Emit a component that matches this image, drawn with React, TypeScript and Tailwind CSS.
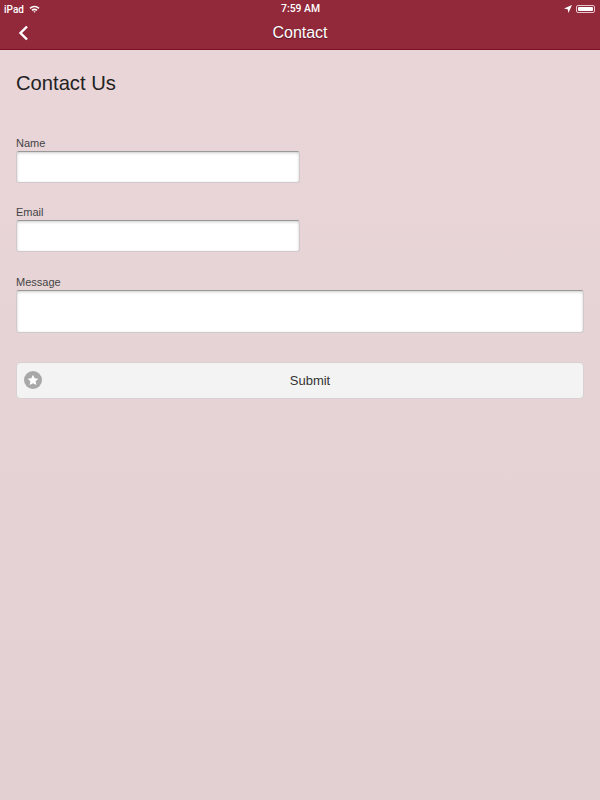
const FONT = "font-['Liberation_Sans',Arial,sans-serif]";

function Field({ label, tall, wide }: { label: string; tall?: boolean; wide?: boolean }) {
  return (
    <div className={`flex flex-col ${tall ? "mt-[1px]" : ""}`}>
      <label className="h-[17px] text-[11px] leading-[18px] text-[#444]">{label}</label>
      <div
        className={`${tall ? "h-[43px]" : "h-[32px]"} ${wide ? "w-[568px]" : "w-[284px]"} rounded-[3px] border border-[#d0c8ca] border-t-[#999] bg-white shadow-[inset_0_1px_3px_rgba(0,0,0,0.2)]`}
      />
    </div>
  );
}

export default function App() {
  return (
    <div className={`${FONT} flex min-h-[800px] w-[600px] flex-col bg-gradient-to-b from-[#ead6d9] to-[#e2d0d3]`}>
      <header className="h-[50px] border-b border-[#7a1020] bg-[#92293b] text-white">
        <div className="flex h-[17px] items-center justify-between pl-[4px] pr-[4px] pt-[1px]">
          <div className="flex w-[100px] items-center gap-[5px] font-['Roboto',sans-serif] text-[10px] font-medium">
            <span>iPad</span>
            <svg width="11" height="8" viewBox="0 0 11 8" fill="none">
              <path d="M0.5 2.8C3.4 0 7.6 0 10.5 2.8L9.4 3.9C7.1 1.8 3.9 1.8 1.6 3.9Z" fill="white" />
              <path d="M2.5 4.8C4.2 3.2 6.8 3.2 8.5 4.8L7.4 5.9C6.3 4.9 4.7 4.9 3.6 5.9Z" fill="white" />
              <path d="M4.5 6.7C5.1 6.2 5.9 6.2 6.5 6.7L5.5 7.8Z" fill="white" />
            </svg>
          </div>
          <span className="pl-[1px] font-['Roboto',sans-serif] text-[10.4px] font-medium">7:59 AM</span>
          <div className="flex w-[100px] items-center justify-end gap-[4px] pr-[1px]">
            <svg width="8" height="8" viewBox="0 0 8 8">
              <path d="M8 0L0 3.6L3.7 4.3L4.4 8Z" fill="white" />
            </svg>
            <div className="flex h-[8px] w-[19px] items-center rounded-[2px] border border-[#e8c8ce] p-[1px]">
              <div className="h-full w-full rounded-[1px] bg-white" />
            </div>
          </div>
        </div>
        <div className="relative flex h-[32px] items-center justify-center">
          <svg className="absolute left-[18px] top-[8px]" width="11" height="16" viewBox="0 0 11 16" fill="none">
            <path d="M9 1.5L2.5 8L9 14.5" stroke="white" strokeWidth="2.4" />
          </svg>
          <h1 className="text-[16px] text-white [text-shadow:0_1px_1px_rgba(0,0,0,0.4)]">Contact</h1>
        </div>
      </header>

      <main className="flex flex-col px-[16px]">
        <h2 className="mt-[21px] h-[24px] text-[20.2px] leading-[24px] text-[#222]">Contact Us</h2>
        <div className="mt-[39px] flex flex-col gap-[20px]">
          <Field label="Name" />
          <Field label="Email" />
          <Field label="Message" tall wide />
        </div>
        <button className="relative mt-[29px] flex h-[37px] w-[568px] items-center justify-center rounded-[4px] border border-[#d8d0d2] bg-[#f3f3f3] pl-[20px] text-[13px] text-[#333]">
          <span className="absolute left-[7px] top-[8px] flex h-[18px] w-[18px] items-center justify-center rounded-full bg-[#a8a8a8]">
            <svg width="12" height="12" viewBox="0 0 24 24">
              <path d="M12 1.5L15.2 8.4L22.8 9.3L17.2 14.5L18.7 22L12 18.3L5.3 22L6.8 14.5L1.2 9.3L8.8 8.4Z" fill="white" />
            </svg>
          </span>
          Submit
        </button>
      </main>
    </div>
  );
}
